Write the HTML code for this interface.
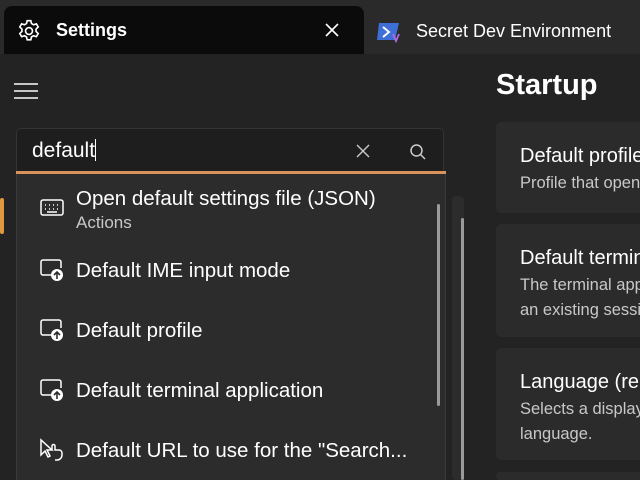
<!DOCTYPE html>
<html><head><style>
*{margin:0;padding:0;box-sizing:border-box}
html,body{width:640px;height:480px;overflow:hidden}
body{background:#232323;font-family:"Segoe UI","Liberation Sans",sans-serif;color:#fff;position:relative}
.a{position:absolute}
.top{left:0;top:0;width:640px;height:54px;background:#2a2a2a}
.tab{left:4px;top:6px;width:360px;height:48px;background:#0b0b0b;border-radius:8px 8px 0 0}
.card{left:496px;width:144px;background:#2b2b2b;border-radius:5px 0 0 5px;overflow:hidden}
.ct{font-size:20px;left:24px;top:23px;white-space:nowrap;color:#fff}
.cs{font-size:16.5px;left:24px;top:49px;white-space:nowrap;color:#c8c8c8;line-height:25px}
.item{left:0;font-size:20.5px;white-space:nowrap}
</style></head><body>
<div class="a top"></div>
<div class="a tab"></div>
<svg class="a" style="left:16px;top:18px" width="26" height="26" viewBox="0 0 24 24" fill="none" stroke="#fff" stroke-width="1.5"><circle cx="12" cy="12" r="3.2"/><path d="M10.3 2.5h3.4l.6 2.6 1.9 1.1 2.6-.8 1.7 2.9-2 1.9v2.2l2 1.9-1.7 2.9-2.6-.8-1.9 1.1-.6 2.6h-3.4l-.6-2.6-1.9-1.1-2.6.8-1.7-2.9 2-1.9v-2.2l-2-1.9 1.7-2.9 2.6.8 1.9-1.1z"/></svg>
<div class="a" style="left:56px;top:20px;font-size:18px;font-weight:bold">Settings</div>
<svg class="a" style="left:324px;top:22px" width="16" height="16" viewBox="0 0 16 16" stroke="#fff" stroke-width="1.6"><path d="M2 2L14 14M14 2L2 14"/></svg>
<svg class="a" style="left:377px;top:20px" width="26" height="24" viewBox="0 0 26 24"><path d="M2 3h20l-4 17H0z" fill="#3d6fd6"/><path d="M6 7l6 5-6 5" stroke="#fff" stroke-width="2" fill="none"/><path d="M16 14l3 7 3-7" stroke="#b06be0" stroke-width="1.8" fill="none"/></svg>
<div class="a" style="left:416px;top:21px;font-size:18px;color:#fff">Secret Dev Environment</div>
<svg class="a" style="left:14px;top:82px" width="24" height="18" stroke="#ddd" stroke-width="1.7"><path d="M0 2h24M0 9h24M0 16h24"/></svg>
<div class="a" style="left:496px;top:69px;font-size:29px;font-weight:bold">Startup</div>
<div class="a card" style="top:122px;height:91px"><div class="a ct">Default profile</div><div class="a cs">Profile that opens</div></div>
<div class="a card" style="top:224px;height:113px"><div class="a ct">Default terminal</div><div class="a cs">The terminal app<br>an existing session</div></div>
<div class="a card" style="top:348px;height:112px"><div class="a ct">Language (re</div><div class="a cs">Selects a display<br>language.</div></div>
<div class="a card" style="top:472px;height:8px"></div>
<div class="a" style="left:452px;top:196px;width:12px;height:284px;background:#2c2c2c;border-radius:4px"></div>
<div class="a" style="left:461px;top:218px;width:3px;height:262px;background:#9a9a9a;border-radius:2px"></div>
<div class="a" style="left:0;top:198px;width:4px;height:36px;background:#e0983e;border-radius:2px"></div>
<div class="a" style="left:16px;top:128px;width:428px;height:46px;background:#1e1e1e;border-radius:5px 5px 0 0;border:1px solid #333"></div>
<div class="a" style="left:16px;top:171px;width:430px;height:3px;background:#d9925a"></div>
<div class="a" style="left:32px;top:139px;font-size:21px">default<span style="display:inline-block;width:1px;height:22px;background:#fff;vertical-align:-4px"></span></div>
<svg class="a" style="left:356px;top:144px" width="14" height="14" stroke="#ccc" stroke-width="1.4"><path d="M1 1L13 13M13 1L1 13"/></svg>
<svg class="a" style="left:409px;top:143px" width="18" height="18" fill="none" stroke="#ccc" stroke-width="1.5"><circle cx="7.5" cy="7.5" r="5.5"/><path d="M11.5 11.5L16 16"/></svg>
<div class="a" style="left:16px;top:174px;width:430px;height:306px;background:#2c2c2c;border-left:1px solid #3a3a3a;border-right:1px solid #3a3a3a"></div>
<div class="a" style="left:437px;top:204px;width:3px;height:202px;background:#9a9a9a;border-radius:2px"></div>
<svg class="a" style="left:40px;top:198px" width="24" height="20" fill="none" stroke="#fff" stroke-width="1.5"><rect x="1" y="2" width="22" height="15" rx="2"/><path d="M5 7h1M9 7h1M13 7h1M17 7h1M5 11h1M9 11h1M13 11h1M17 11h1M7 14h10" stroke-width="1.5"/></svg>
<div class="a item" style="left:76px;top:187px">Open default settings file (JSON)</div>
<div class="a" style="left:76px;top:213px;font-size:17px;color:#c8c8c8">Actions</div>
<svg class="a" style="left:38px;top:258px" width="28" height="24"><path d="M3 15V4a2 2 0 0 1 2-2h16a2 2 0 0 1 2 2v6M3 15a2 2 0 0 0 2 2h8" fill="none" stroke="#fff" stroke-width="1.5"/><circle cx="19" cy="17" r="6" fill="#fff"/><path d="M19 21v-7M16 17l3-3 3 3" stroke="#2c2c2c" stroke-width="1.6" fill="none"/></svg>
<div class="a item" style="left:76px;top:259px">Default IME input mode</div>
<svg class="a" style="left:38px;top:318px" width="28" height="24"><path d="M3 15V4a2 2 0 0 1 2-2h16a2 2 0 0 1 2 2v6M3 15a2 2 0 0 0 2 2h8" fill="none" stroke="#fff" stroke-width="1.5"/><circle cx="19" cy="17" r="6" fill="#fff"/><path d="M19 21v-7M16 17l3-3 3 3" stroke="#2c2c2c" stroke-width="1.6" fill="none"/></svg>
<div class="a item" style="left:76px;top:319px">Default profile</div>
<svg class="a" style="left:38px;top:378px" width="28" height="24"><path d="M3 15V4a2 2 0 0 1 2-2h16a2 2 0 0 1 2 2v6M3 15a2 2 0 0 0 2 2h8" fill="none" stroke="#fff" stroke-width="1.5"/><circle cx="19" cy="17" r="6" fill="#fff"/><path d="M19 21v-7M16 17l3-3 3 3" stroke="#2c2c2c" stroke-width="1.6" fill="none"/></svg>
<div class="a item" style="left:76px;top:379px">Default terminal application</div>
<svg class="a" style="left:39px;top:438px" width="28" height="24" fill="none" stroke="#fff" stroke-width="1.5"><path d="M2 2v15l4-4 3 6 2-1-3-6h5z"/><path d="M13 12v-4a1.5 1.5 0 0 1 3 0v4l4 0a3 3 0 0 1 3 3v2a5 5 0 0 1-5 5h-2"/></svg>
<div class="a item" style="left:76px;top:439px">Default URL to use for the "Search...</div>
</body></html>
